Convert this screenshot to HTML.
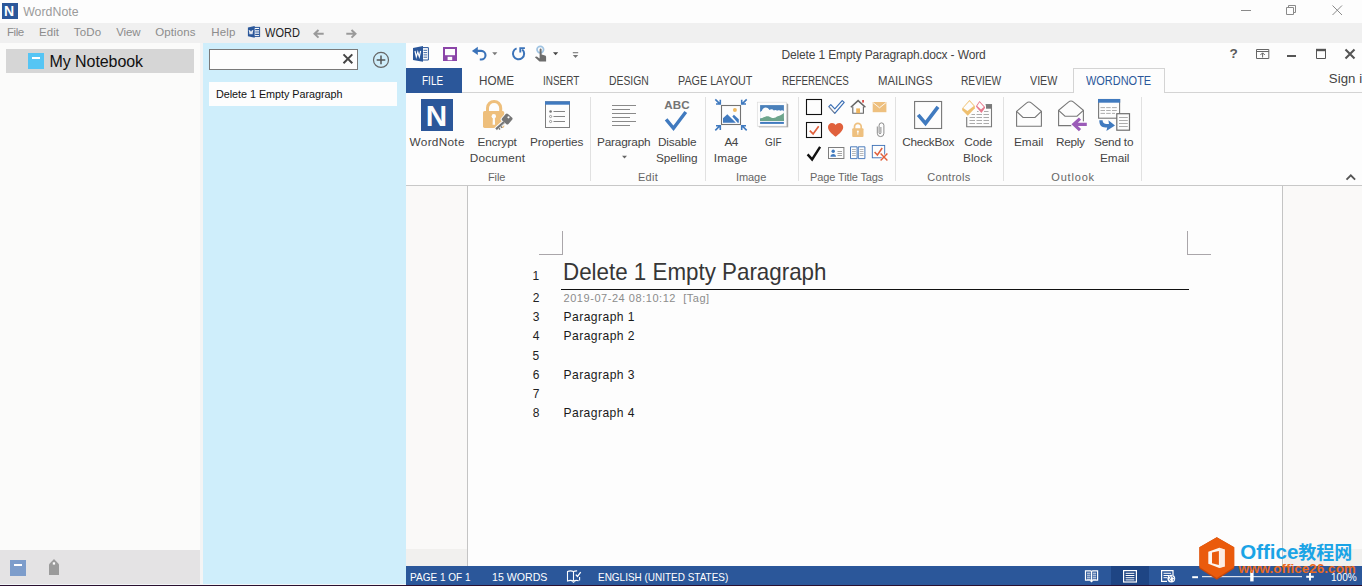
<!DOCTYPE html>
<html lang="en">
<head>
<meta charset="utf-8">
<title>WordNote</title>
<style>
html,body{margin:0;padding:0}
body{width:1362px;height:586px;overflow:hidden;position:relative;background:#fdfdfd;font-family:"Liberation Sans",sans-serif}
.b{position:absolute;box-sizing:border-box}
.t{position:absolute;white-space:pre;display:block}
svg{position:absolute;overflow:visible}
</style>
</head>
<body>
<!-- WordNote title bar -->
<div class="b" style="left:0;top:0;width:1362px;height:23px;background:#fdfdfd"></div>
<!-- menu bar -->
<div class="b" style="left:0;top:23px;width:1362px;height:20px;background:#f0f0f0"></div>
<!-- left panel -->
<div class="b" style="left:0;top:43px;width:203px;height:541px;background:#fbfbfa"></div>
<div class="b" style="left:6px;top:49px;width:188px;height:24px;background:#d6d6d6"></div>
<div class="b" style="left:0;top:550px;width:200px;height:34px;background:#e4e3e4"></div>
<div class="b" style="left:200px;top:43px;width:3px;height:541px;background:#f4f4f4"></div>
<!-- page list panel -->
<div class="b" style="left:203px;top:43px;width:203px;height:541px;background:#cfeefb"></div>
<div class="b" style="left:209px;top:49px;width:149px;height:21px;background:#fdfdfd;border:1px solid #7a7a7a"></div>
<div class="b" style="left:209px;top:82px;width:188px;height:24px;background:#fdfdfd"></div>
<!-- Word window -->
<div class="b" style="left:406px;top:43px;width:956px;height:541px;background:#fdfdfd"></div>
<div class="b" style="left:406px;top:68px;width:56px;height:25px;background:#2b579a"></div>
<div class="b" style="left:462px;top:92px;width:900px;height:1px;background:#d4d4d4"></div>
<div class="b" style="left:1073px;top:68px;width:92px;height:25px;background:#fdfdfd;border:1px solid #d4d4d4;border-bottom:none"></div>
<!-- ribbon group separators -->
<div class="b" style="left:590px;top:97px;width:1px;height:84px;background:#e1e1e1"></div>
<div class="b" style="left:705px;top:97px;width:1px;height:84px;background:#e1e1e1"></div>
<div class="b" style="left:798px;top:97px;width:1px;height:84px;background:#e1e1e1"></div>
<div class="b" style="left:895px;top:97px;width:1px;height:84px;background:#e1e1e1"></div>
<div class="b" style="left:1003px;top:97px;width:1px;height:84px;background:#e1e1e1"></div>
<div class="b" style="left:1141px;top:97px;width:1px;height:84px;background:#e1e1e1"></div>
<!-- ribbon bottom -->
<div class="b" style="left:406px;top:185px;width:956px;height:1px;background:#c8c8c8"></div>
<!-- doc area -->
<div class="b" style="left:406px;top:186px;width:956px;height:380px;background:#faf9f8"></div>
<div class="b" style="left:467px;top:186px;width:816px;height:380px;background:#fdfdfd;border-left:1px solid #c4c4c4;border-right:1px solid #c4c4c4"></div>
<div class="b" style="left:406px;top:549px;width:61px;height:17px;background:#f1f0ee"></div>
<div class="b" style="left:1284px;top:549px;width:78px;height:17px;background:#f1f0ee"></div>
<!-- crop marks -->
<div class="b" style="left:539px;top:231px;width:24px;height:24px;border-right:1px solid #aaa6aa;border-bottom:1px solid #aaa6aa"></div>
<div class="b" style="left:1187px;top:231px;width:24px;height:24px;border-left:1px solid #aaa6aa;border-bottom:1px solid #aaa6aa"></div>
<!-- title underline -->
<div class="b" style="left:561px;top:289px;width:628px;height:1px;background:#111"></div>
<!-- status bar -->
<div class="b" style="left:406px;top:566px;width:956px;height:19px;background:#2b579a"></div>
<div class="b" style="left:1111px;top:566px;width:38px;height:19px;background:#1e4584"></div>
<!-- bottom edge -->
<div class="b" style="left:0;top:584px;width:406px;height:1px;background:#f2f6f8"></div>
<div class="b" style="left:0;top:585px;width:1362px;height:1px;background:#2a1030"></div>
<!-- app icon -->
<div class="b" style="left:2px;top:3px;width:16px;height:16px;background:#2b579a"></div>
<span class="t" style="left:3.900px;top:3px;font-size:14px;line-height:16px;font-weight:bold;color:#fff">N</span>
<!-- WordNote window controls -->
<svg style="left:1236px;top:0" width="126" height="23" viewBox="1236 0 126 23" fill="none" stroke="#8a8a8a" stroke-width="1">
<path d="M1241 10.5h10"/>
<path d="M1286.5 7.5h7v7h-7z M1288.5 7.5v-2h7v7h-2"/>
<path d="M1332.5 5.5l9.5 9.5 M1342 5.5l-9.5 9.5"/>
</svg>
<!-- menu: Word icon + arrows -->
<svg style="left:247px;top:25px" width="14" height="14" viewBox="247 25 14 14">
<rect x="253.500" y="27.400" width="6.100" height="9" fill="#fdfdfd" stroke="#2b579a" stroke-width="1"/>
<path d="M255.200 29.700h3.900M255.200 32h3.900M255.200 34.300h3.900" stroke="#2b579a" stroke-width="1.200"/>
<path d="M247.900 27.600l6.800-1.500v11.700l-6.800-1.500z" fill="#2b579a"/>
<path d="M249.200 30l.9 4.200.9-3.400.9 3.400.9-4.200" fill="none" stroke="#fff" stroke-width="0.900"/>
</svg>
<svg style="left:312px;top:28px" width="48" height="12" viewBox="312 28 48 12" fill="none" stroke="#9a9a9a" stroke-width="2">
<path d="M323.7 33.8h-9 M318.5 30l-4 3.8 4 3.8"/>
<path d="M346.3 33.8h9 M351.5 30l4 3.8-4 3.8"/>
</svg>
<!-- notebook icon -->
<div class="b" style="left:28px;top:53px;width:16px;height:16px;background:#56c5f4"></div>
<div class="b" style="left:32px;top:56.6px;width:8px;height:2.2px;background:#fff"></div>
<!-- search x and plus -->
<svg style="left:340px;top:50px" width="50" height="20" viewBox="340 50 50 20" fill="none">
<path d="M343.500 54.400l8.800 8.800 M352.300 54.400l-8.800 8.800" stroke="#444" stroke-width="2"/>
<circle cx="381" cy="59.900" r="7.500" stroke="#666" stroke-width="1.2"/>
<path d="M376.700 59.900h8.600 M381 55.600v8.600" stroke="#555" stroke-width="1.5"/>
</svg>
<!-- bottom-left icons -->
<div class="b" style="left:10px;top:560px;width:16px;height:16px;background:#7d9dcb"></div>
<div class="b" style="left:14px;top:564px;width:8px;height:2.4px;background:#fff"></div>
<svg style="left:48px;top:558px" width="12" height="18" viewBox="0 0 12 18">
<path d="M1 6.2L6 1l5 5.2V17H1z" fill="#9b9b9b"/><rect x="4.8" y="4.3" width="2.3" height="2.3" fill="#fdfdfd"/>
</svg>
<!-- QAT -->
<svg style="left:412px;top:45px" width="18" height="18" viewBox="0 0 18 18">
<path d="M9.5 2.6h6.9v12.4H9.5z" fill="#fdfdfd" stroke="#2b579a" stroke-width="1"/>
<path d="M11.5 5.3h3.6M11.5 7.6h3.6M11.5 9.9h3.6M11.5 12.2h3.6" stroke="#2b579a" stroke-width="0.9"/>
<path d="M1 2.9L11 1v15.8L1 14.9z" fill="#2b579a"/>
<path d="M3 6l1.3 5.8L5.8 7l1.5 4.8L8.6 6" fill="none" stroke="#fff" stroke-width="1.15"/>
</svg>
<svg style="left:443px;top:47px" width="14" height="14" viewBox="0 0 14 14">
<path d="M1 1h12v12H1z" fill="#fdfdfd" stroke="#8b45a8" stroke-width="2"/>
<path d="M1 8.200h12V13H1z" fill="#8b45a8"/>
<rect x="4.6" y="9.8" width="4.6" height="3.4" fill="#fdfdfd"/>
</svg>
<svg style="left:470px;top:45px" width="112" height="18" viewBox="470 45 112 18" fill="none">
<path d="M476 50.900h5.200a4.300 4.300 0 0 1 0 8.600h-1.400" stroke="#3b73b9" stroke-width="2.100"/>
<path d="M471.900 50.900l5.900-4.200v8.400z" fill="#3b73b9"/>
<path d="M492.2 52.3h5.2l-2.6 2.9z" fill="#7a7a7a"/>
<path d="M516.600 48.400A5.600 5.600 0 1 0 522.200 49.400" stroke="#3b73b9" stroke-width="2"/>
<path d="M524.900 48.100H520.300V52.500" stroke="#3b73b9" stroke-width="1.900"/>
<circle cx="540.300" cy="49.600" r="3.300" fill="#fdfdfd" stroke="#9fc3e2" stroke-width="1.700"/>
<path d="M539.6 49.4a1 1 0 0 1 2 0v5l3.4 1.2c.9.4 1.1.9 1.1 1.6v4.400h-6.6l-4.600-4.400c.9-1.100 2.200-.8 3.200.2l1.500 1.200z" fill="#6d6d6d"/>
<path d="M553 52.3h5.200l-2.600 2.900z" fill="#444"/>
<path d="M572.800 52.700h5.400" stroke="#777" stroke-width="1.100"/>
<path d="M572.800 55h5.400l-2.700 3z" fill="#777"/>
</svg>
<!-- Word window controls -->
<span class="t" style="left:1229.400px;top:46px;font-size:13.600px;line-height:15px;font-weight:bold;color:#5a5a5a">?</span>
<svg style="left:1250px;top:45px" width="112" height="18" viewBox="1250 45 112 18" fill="none">
<path d="M1256.500 49.500h12.300v9h-12.300z M1256.500 51.500h12.300" stroke="#666" stroke-width="1"/>
<path d="M1262.600 57.500v-4.500 M1260.400 55l2.200-2.200 2.200 2.200" stroke="#666" stroke-width="1"/>
<path d="M1287 56h9" stroke="#555" stroke-width="2"/>
<path d="M1316.500 50.500h9v8h-9z" stroke="#555" stroke-width="1"/><path d="M1316 50h10" stroke="#555" stroke-width="2.400"/>
<path d="M1345.500 49.500l9 9 M1354.500 49.500l-9 9" stroke="#555" stroke-width="2.100"/>
</svg>
<svg style="left:1340px;top:170px" width="20" height="14" viewBox="1340 170 20 14" fill="none">
<path d="M1346.500 179.600l4.300-4.300 4.300 4.300" stroke="#555" stroke-width="1.900"/>
</svg>
<!-- ribbon: WordNote N -->
<div class="b" style="left:421px;top:99px;width:32px;height:32px;background:#2b579a"></div>
<span class="t" style="left:425.700px;top:101.300px;font-size:29.600px;line-height:29.600px;font-weight:bold;color:#fdfdfd">N</span>
<!-- Encrypt lock + key -->
<svg style="left:480px;top:98px" width="36" height="36" viewBox="480 98 36 36" fill="none">
<path d="M487.500 112v-3.900a6.600 6.600 0 0 1 13.200 0v3.900" stroke="#eebf7c" stroke-width="3"/>
<rect x="483" y="111" width="21.200" height="16.900" rx="1.600" fill="#eebf7c"/>
<circle cx="493.800" cy="116.300" r="2.200" fill="#fdfdfd"/><path d="M492.900 117h1.900l.3 7.800h-2.500z" fill="#fdfdfd"/>
<path d="M496 129.400l8-7.200" stroke="#fdfdfd" stroke-width="4.600"/>
<rect x="-5.100" y="-5.100" width="10.200" height="10.200" rx="2" transform="translate(507 119) rotate(42)" fill="#fdfdfd"/>
<rect x="-4.300" y="-4.300" width="8.600" height="8.600" rx="1.600" transform="translate(507.100 119) rotate(42)" fill="#767676"/>
<path d="M496.100 129.300l8-7.200" stroke="#767676" stroke-width="2.500"/>
<path d="M497.400 129.600l7.200-6.500" stroke="#e8e8e8" stroke-width="0.700"/>
<path d="M498.900 128.200l1.200 1.300 M500.900 126.400l1.200 1.300" stroke="#767676" stroke-width="1.300"/>
<circle cx="508.500" cy="117.300" r="1.100" fill="#fdfdfd"/>
</svg>
<!-- Properties -->
<svg style="left:544px;top:100px" width="28" height="30" viewBox="544 100 28 30" fill="none">
<rect x="545.500" y="101.800" width="24" height="25.700" fill="#fdfdfd" stroke="#7d7d7d" stroke-width="1"/>
<rect x="545" y="101.300" width="25" height="3.400" fill="#407abf"/>
<circle cx="550.600" cy="111.500" r="1.300" fill="#777"/>
<circle cx="550.600" cy="116.500" r="1.100" stroke="#777" stroke-width="0.700"/>
<circle cx="550.600" cy="121.500" r="1.100" stroke="#777" stroke-width="0.700"/>
<path d="M553.500 111.500h11.500 M553.500 116.500h11.500 M553.500 121.500h11.500" stroke="#777" stroke-width="0.900"/>
</svg>
<!-- Paragraph -->
<svg style="left:610px;top:100px" width="30" height="62" viewBox="610 100 30 62" fill="none">
<path d="M612 105.500h24 M612 109.500h18 M612 113.500h24 M612 117.500h18 M612 121.500h24 M612 125.500h18" stroke="#7d7d7d" stroke-width="0.900"/>
<path d="M622 155.800h5l-2.500 2.800z" fill="#666"/>
</svg>
<!-- Disable Spelling -->
<span class="t" style="left:664.300px;top:98px;font-size:11.600px;line-height:13px;font-weight:bold;color:#747474;letter-spacing:0.100px">ABC</span>
<svg style="left:660px;top:108px" width="34" height="26" viewBox="660 108 34 26" fill="none">
<path d="M666.100 119.300L673.500 128.300L685.800 111.900" stroke="#407abf" stroke-width="3.400"/>
</svg>
<!-- A4 Image -->
<svg style="left:712px;top:97px" width="38" height="36" viewBox="712 97 38 36" fill="none">
<rect x="721.500" y="105.500" width="19" height="19" fill="#fdfdfd" stroke="#737373" stroke-width="1.100"/>
<circle cx="734.900" cy="109.900" r="2" fill="#efb960"/>
<path d="M723 122.700v-4.400l4.300-4.100 8.600 8.500z" fill="#407abf"/>
<path d="M732.300 116.400l1.600-1.600 4.900 4.500v3.400h-1.200z" fill="#407abf"/>
<g stroke="#407abf" stroke-width="1.600">
<path d="M715.300 99.400l5 5 M716 104h4.300v-4.300"/>
<path d="M746.700 99.400l-5 5 M746 104h-4.300v-4.300"/>
<path d="M715.300 130.400l5-5 M716 125.800h4.300v4.300"/>
<path d="M746.700 130.400l-5-5 M746 125.800h-4.300v4.300"/>
</g>
</svg>
<!-- GIF -->
<svg style="left:755px;top:100px" width="36" height="30" viewBox="755 100 36 30" fill="none">
<rect x="759" y="104" width="29.300" height="23.400" fill="#8a8a8a" opacity="0.550"/>
<rect x="758.400" y="103.400" width="29.200" height="23.400" fill="#5a5a5a" opacity="0.450"/>
<rect x="757.300" y="102.200" width="29.200" height="24" fill="#fdfdfd" stroke="#dcdcdc" stroke-width="0.700"/>
<rect x="760.100" y="105.100" width="23.800" height="15.900" fill="#4a80ba"/>
<path d="M760.100 112c.8-.6 1.400-1 1.900-1.200.2-2.600 3.400-4.200 5.600-2.800.9.500 1.500 1.200 1.900 2 1.300-1 3.400-.8 4.300.5 1-.7 2.500-.7 3.400.3.800-.6 2.200-.6 3 0 1.200-.9 2.800-.7 3.700.2v7.500h-23.800z" fill="#fdfdfd"/>
<path d="M760.100 118.700c1.800-.6 3.600-1.500 5.200-2 1.500-.5 2.800-.4 4.200 0 1.500.5 2.600 1.400 4 1.400 1.600 0 2.600-1.200 4.200-1.800 2.200-.8 4.400-1.800 6.200-3.400V121h-23.800z" fill="#6da58c"/>
<rect x="760.100" y="121.900" width="23.800" height="2" fill="#407abf"/>
</svg>
<!-- Page Title Tags grid -->
<svg style="left:804px;top:97px" width="88" height="66" viewBox="804 97 88 66" fill="none">
<!-- row1 -->
<rect x="806.500" y="99.500" width="15" height="15" fill="#fdfdfd" stroke="#111" stroke-width="1.100"/>
<path d="M828.800 106.600l2-2 4 4.200 7.400-8.200 2 1.800-9.400 11z" fill="#fdfdfd" stroke="#3b6fb5" stroke-width="1.200" stroke-linejoin="round"/>
<path d="M829.400 107.200l5.400 6" stroke="#e9a050" stroke-width="0.500"/>
<path d="M850.800 107.200l7.300-6.600 7.300 6.600" stroke="#666" stroke-width="1.500"/>
<path d="M852.800 106.500v6.700h10.600v-6.700" stroke="#666" stroke-width="1.100"/>
<rect x="856.200" y="108.400" width="3.800" height="4.800" fill="#eeb55f"/>
<rect x="862.200" y="100" width="1.700" height="2.600" fill="#d9413a"/>
<rect x="872.700" y="102" width="13.700" height="10.200" fill="#eec07f"/>
<path d="M873 102.600l6.500 5.200 6.500-5.200" stroke="#fdfdfd" stroke-width="0.900"/>
<!-- row2 -->
<rect x="806.500" y="122.500" width="15" height="15" fill="#fdfdfd" stroke="#111" stroke-width="1.100"/>
<path d="M809.800 130.600l3.300 3.300 5.600-7.600" stroke="#e0603c" stroke-width="1.700"/>
<path d="M835.600 136.800c-3.600-2.900-7.600-5.800-7.600-9.800 0-2.300 1.800-4.100 4-4.100 1.500 0 2.900.8 3.600 2.200.7-1.400 2.100-2.200 3.600-2.200 2.200 0 4 1.800 4 4.100 0 4-4 6.900-7.600 9.800z" fill="#e0603c"/>
<path d="M854.500 129v-2.300a3.350 3.350 0 0 1 6.700 0v2.300" stroke="#eec07f" stroke-width="1.700"/>
<rect x="852.200" y="128.300" width="11.300" height="8.700" rx="1" fill="#eec07f"/>
<circle cx="857.850" cy="131.500" r="1" fill="#fdfdfd"/><rect x="857.400" y="131.700" width="0.900" height="3" fill="#fdfdfd"/>
<path d="M877.300 126.500v6.800a3.300 3.300 0 0 0 6.600 0v-8a2.400 2.400 0 0 0-4.800 0v7.500a.9.900 0 0 0 1.800 0v-5.800" stroke="#7d7d7d" stroke-width="0.900"/>
<!-- row3 -->
<path d="M807.600 154.400l4.500 5 8-12.600" stroke="#111" stroke-width="2.400"/>
<rect x="828.500" y="147.500" width="15.400" height="11" fill="#fdfdfd" stroke="#7d7d7d" stroke-width="1"/>
<circle cx="833.200" cy="151.300" r="1.700" fill="#407abf"/><path d="M830.400 156.800c0-3.600 5.600-3.600 5.600 0z" fill="#407abf"/>
<path d="M837.500 151.500h4.500 M837.500 153.500h4.500 M837.500 155.500h4.500" stroke="#8d8d8d" stroke-width="0.800"/>
<path d="M850.500 146.800h6.600v11.800h-6.600z M858.300 146.800h6.600v11.800h-6.600z" stroke="#3b6fb5" stroke-width="0.900" fill="#fdfdfd"/>
<path d="M852 149.500h3.800 M852 151.500h3.800 M852 153.500h3.800 M852 155.500h3.800 M859.700 149.500h3.800 M859.700 151.500h3.800 M859.700 153.500h3.800 M859.700 155.500h3.800" stroke="#9a9a9a" stroke-width="0.700"/>
<rect x="872.300" y="145.400" width="12.400" height="12.400" fill="#fdfdfd" stroke="#3b6fb5" stroke-width="0.900"/>
<path d="M874.600 152l2.800 3 4.800-7" stroke="#e0603c" stroke-width="1.500"/>
<path d="M880.600 153.400l6.800 7.200 M887.400 153.400l-6.800 7.200" stroke="#fdfdfd" stroke-width="2.600"/>
<path d="M880.600 153.400l6.800 7.200 M887.400 153.400l-6.800 7.200" stroke="#e0603c" stroke-width="1.400"/>
</svg>
<!-- CheckBox -->
<svg style="left:912px;top:99px" width="32" height="32" viewBox="912 99 32 32" fill="none">
<rect x="914.600" y="101.500" width="27" height="27" fill="#fdfdfd" stroke="#777" stroke-width="1.100"/>
<path d="M918.200 114.800L925.500 123.400L938 106.800" stroke="#407abf" stroke-width="3.600"/>
</svg>
<!-- Code Block -->
<svg style="left:960px;top:98px" width="34" height="32" viewBox="960 98 34 32" fill="none">
<path d="M966.700 117v9.700h24.800v-22h-6" stroke="#7a7a7a" stroke-width="1.100"/>
<rect x="986" y="104.200" width="6" height="4.500" fill="#7a7a7a"/>
<g stroke="#a2a2a2" stroke-width="0.900"><path d="M977 111.500h1.600 M984 111.500h4.500 M971.500 114.500h3.500 M976.500 114.500h5.500 M983.500 114.500h5.500 M969.500 117.500h5.500 M976.500 117.500h5.500 M983.500 117.500h5.500 M969.500 120.500h5.500 M976.500 120.500h5.500 M983.500 120.500h5.500 M969.500 123.500h5.500 M976.500 123.500h5.500 M983.500 123.500h5.500"/></g>
<path d="M969.500 100.100l5.300 5.800v2.300l-7 7.600-5.600-5.600v-2z" fill="#efc070"/>
<path d="M969.500 101.300l4.300 4.700-6.300 4.900-4.300-2.800z" fill="#fdfdfd"/>
<path d="M979.500 101l5.500 5.900v1l-3.600 5.100-5.300-6.200v-.9z" fill="#e8788c"/>
<path d="M979.500 102.200l4.300 4.700-2.800 2.700-3.800-3.600z" fill="#fdfdfd"/>
</svg>
<!-- Email / Reply / Send to Email -->
<svg style="left:1012px;top:97px" width="122" height="36" viewBox="1012 97 122 36" fill="none">
<g stroke="#777" stroke-width="1.100">
<path d="M1016.600 111.300l9.800-8.200c1.600-1.300 3.600-1.300 5.200 0l9.800 8.200v15h-24.800z" fill="#fdfdfd"/>
<path d="M1016.600 111.300l6.400 6.200h12l6.400-6.200"/>
<path d="M1071.500 125.600h-12.900v-15.300l9.800-8.200c1.600-1.300 3.600-1.300 5.200 0l9.800 8.200v11.100" fill="#fdfdfd"/>
<path d="M1058.600 110.300l6.400 5.900h12l6.400-5.900"/>
</g>
<path d="M1086.800 124.300h-11.500 M1080 118.600l-6.200 5.700 6.200 5.900" stroke="#fdfdfd" stroke-width="5" fill="none"/>
<path d="M1086.800 124.300h-11.500 M1080 118.600l-6.200 5.700 6.200 5.900" stroke="#9b5bb8" stroke-width="3.200" fill="none"/>
<rect x="1098.600" y="99.500" width="21" height="18.700" fill="#fdfdfd" stroke="#777" stroke-width="1.100"/>
<rect x="1098" y="99" width="22.200" height="3.700" fill="#407abf"/>
<g stroke="#a4a4a4" stroke-width="0.900"><path d="M1100.500 107.600h4.500 M1106.200 107.600h4.500 M1112 107.600h4.800 M1100.500 110.500h4.500 M1106.200 110.500h4.500 M1112 110.500h4.800 M1100.500 113.400h4.500 M1106.200 113.400h4.500 M1112 113.400h3"/></g>
<rect x="1116.800" y="113.700" width="12.700" height="16.500" fill="#fdfdfd" stroke="#6e6e6e" stroke-width="1.200"/>
<path d="M1119 117.500h8.800 M1119 120.500h8.800 M1119 123.500h8.800 M1119 126.500h8.800" stroke="#a4a4a4" stroke-width="0.900"/>
<path d="M1099.300 120.200h3.300c0 2.600 1.600 3.700 4 3.700h2.400l-.6-3.700 6.600 5.200-8.600 5.600.8-3.600h-1.800c-4 0-6.100-2.400-6.100-7.200z" fill="#407abf"/>
</svg>
<!-- status bar icons -->
<svg style="left:560px;top:566px" width="30" height="18" viewBox="560 566 30 18" fill="none" stroke="#fff" stroke-width="1.100">
<path d="M567.500 571.500c2-.8 4-.8 6 0v9.500c-2-.8-4-.8-6 0z"/>
<path d="M573.500 571.500c1.200-.5 2.400-.7 3.600-.6 M573.500 581c1.600-.7 3.400-.8 5.200-.3 M579.600 577v3.600"/>
<path d="M575.800 574.600l1.700 1.900 3.200-4.300" stroke-width="1.300"/>
<path d="M572 581.200l1.500 1.600 1.500-1.600" stroke-width="0.900"/>
</svg>
<svg style="left:1080px;top:566px" width="240" height="18" viewBox="1080 566 240 18" fill="none">
<g stroke="#fff" stroke-width="1.200">
<path d="M1085.500 570.800h5c.6 0 1 .4 1 1v9.400c0-.6-.4-1-1-1h-5z M1097.600 570.800h-5c-.6 0-1 .4-1 1v9.400c0-.6.400-1 1-1h5z"/>
</g>
<path d="M1087 573.200h3.400 M1087 575.200h3.400 M1087 577.200h3.400 M1087 579.200h3.400 M1092.800 573.200h3.400 M1092.800 575.200h3.400 M1092.800 577.200h3.400 M1092.800 579.200h3.400" stroke="#fff" stroke-width="0.900"/>
<path d="M1089.800 580.800l1.700 1.800 1.700-1.800z" fill="#fff"/>
<rect x="1123.600" y="570.600" width="12.800" height="11.400" stroke="#fff" stroke-width="1.200"/>
<path d="M1125.600 573.300h8.800 M1125.600 575.500h8.800 M1125.600 577.700h8.800 M1125.600 579.900h8.800" stroke="#fff" stroke-width="1"/>
<path d="M1167 581.400h-5.400v-10.800h11.400v4.400" stroke="#fff" stroke-width="1.200"/>
<path d="M1163.500 573.300h7.600 M1163.500 575.500h5.600 M1163.500 577.700h3.600" stroke="#fff" stroke-width="1"/>
<circle cx="1171.300" cy="578.600" r="3.900" fill="#fff"/>
<path d="M1169.400 576.300c1.400.4 1.600 1.600.600 2.400-.8.600-.4 1.600.600 2 M1172.400 575.700c-.6 1 .2 1.800 1.400 1.800 M1173.400 580.600c-.4-.8-.2-1.400.800-1.600" stroke="#2b579a" stroke-width="0.900"/>
<path d="M1192.200 577.200h5.800" stroke="#fff" stroke-width="2"/>
<path d="M1202 576.700h100" stroke="#fff" stroke-width="1"/>
<rect x="1250.200" y="570.200" width="3.400" height="11.200" fill="#fff"/>
<path d="M1306.200 576.800h7.600 M1310 573v7.600" stroke="#fff" stroke-width="1.900"/>
</svg>
<!-- watermark -->
<svg style="left:1196px;top:534px" width="42" height="50" viewBox="1196 534 42 50">
<path d="M1216.800 537.300l17.400 10v21.300l-17.400 11.200-17.400-11.200v-21.300z" fill="#c5470c"/>
<path d="M1216.800 537.300l17.400 10v19.600l-17.400 11.200-17.400-11.200v-19.600z" fill="#ea5b0c"/>
<path d="M1208.300 551.800l11-4.100 5.500 1.800v17l-5.500 1.400-11-4.100z" fill="#fdf6f0"/>
<path d="M1212 552.600l6.900-1.700v14l-6.900-1.600z" fill="#ea5b0c"/>
<path d="M1219.300 547.700l5.500 1.800v17l-5.500 1.400z" fill="#fbe6d8" opacity="0.600"/>
</svg>
<span class="t" style="left:1240.200px;top:539.700px;font-size:20.500px;line-height:24px;font-weight:bold;color:#1ba4e6;font-family:'Liberation Sans','Noto Sans CJK SC',sans-serif">Office<span style="font-size:18px;position:relative;top:0.500px">教程网</span></span>
<span class="t" style="left:1238.600px;top:561.600px;font-size:13.500px;line-height:14px;font-weight:bold;color:#ea6a1e">www.office26.com</span>

<span class="t" style="left:23.21px;top:5px;font-size:12.3px;line-height:14px;color:#9b9b9b;letter-spacing:0.028px;">WordNote</span>
<span class="t" style="left:6.97px;top:26px;font-size:11.5px;line-height:12px;color:#8c8c8c;letter-spacing:-0.418px;">File</span>
<span class="t" style="left:38.97px;top:26px;font-size:11.5px;line-height:12px;color:#8c8c8c;letter-spacing:0.049px;">Edit</span>
<span class="t" style="left:73.68px;top:26px;font-size:11.5px;line-height:12px;color:#8c8c8c;letter-spacing:0.213px;">ToDo</span>
<span class="t" style="left:116.35px;top:26px;font-size:11.5px;line-height:12px;color:#8c8c8c;letter-spacing:-0.204px;">View</span>
<span class="t" style="left:155.25px;top:26px;font-size:11.5px;line-height:12px;color:#8c8c8c;letter-spacing:0.107px;">Options</span>
<span class="t" style="left:211.27px;top:26px;font-size:11.5px;line-height:12px;color:#8c8c8c;letter-spacing:0.148px;">Help</span>
<span class="t" style="left:265.23px;top:26px;font-size:12.3px;line-height:14px;color:#222;transform:scaleX(0.8947);transform-origin:0 0;">WORD</span>
<span class="t" style="left:49.54px;top:53px;font-size:16px;line-height:17px;color:#111;letter-spacing:-0.071px;">My Notebook</span>
<span class="t" style="left:215.99px;top:88px;font-size:10.8px;line-height:12px;color:#111;letter-spacing:-0.029px;">Delete 1 Empty Paragraph</span>
<span class="t" style="left:781.43px;top:48px;font-size:12px;line-height:14px;color:#444;letter-spacing:-0.141px;">Delete 1 Empty Paragraph.docx - Word</span>
<span class="t" style="left:422.28px;top:74px;font-size:12px;line-height:14px;color:#fff;transform:scaleX(0.8324);transform-origin:0 0;">FILE</span>
<span class="t" style="left:479.36px;top:74px;font-size:12px;line-height:14px;color:#444;transform:scaleX(0.9714);transform-origin:0 0;">HOME</span>
<span class="t" style="left:543.26px;top:74px;font-size:12px;line-height:14px;color:#444;transform:scaleX(0.8287);transform-origin:0 0;">INSERT</span>
<span class="t" style="left:609.15px;top:74px;font-size:12px;line-height:14px;color:#444;transform:scaleX(0.8647);transform-origin:0 0;">DESIGN</span>
<span class="t" style="left:678.42px;top:74px;font-size:12px;line-height:14px;color:#444;transform:scaleX(0.8978);transform-origin:0 0;">PAGE LAYOUT</span>
<span class="t" style="left:782.19px;top:74px;font-size:12px;line-height:14px;color:#444;transform:scaleX(0.8140);transform-origin:0 0;">REFERENCES</span>
<span class="t" style="left:877.67px;top:74px;font-size:12px;line-height:14px;color:#444;transform:scaleX(0.9511);transform-origin:0 0;">MAILINGS</span>
<span class="t" style="left:960.86px;top:74px;font-size:12px;line-height:14px;color:#444;transform:scaleX(0.8483);transform-origin:0 0;">REVIEW</span>
<span class="t" style="left:1029.80px;top:74px;font-size:12px;line-height:14px;color:#444;transform:scaleX(0.8905);transform-origin:0 0;">VIEW</span>
<span class="t" style="left:1086.24px;top:74px;font-size:12px;line-height:14px;color:#2b579a;transform:scaleX(0.9134);transform-origin:0 0;">WORDNOTE</span>
<span class="t" style="left:1328.77px;top:71px;font-size:13.2px;line-height:15px;color:#444;letter-spacing:0.096px;">Sign in</span>
<span class="t" style="left:409.58px;top:135px;font-size:11.8px;line-height:14px;color:#444;letter-spacing:0.288px;">WordNote</span>
<span class="t" style="left:477.54px;top:135px;font-size:11.8px;line-height:14px;color:#444;letter-spacing:-0.109px;">Encrypt</span>
<span class="t" style="left:469.74px;top:151px;font-size:11.8px;line-height:14px;color:#444;letter-spacing:0.216px;">Document</span>
<span class="t" style="left:529.94px;top:135px;font-size:11.8px;line-height:14px;color:#444;letter-spacing:-0.028px;">Properties</span>
<span class="t" style="left:596.94px;top:135px;font-size:11.8px;line-height:14px;color:#444;letter-spacing:-0.173px;">Paragraph</span>
<span class="t" style="left:657.94px;top:135px;font-size:11.8px;line-height:14px;color:#444;letter-spacing:-0.137px;">Disable</span>
<span class="t" style="left:656.07px;top:151px;font-size:11.8px;line-height:14px;color:#444;letter-spacing:-0.069px;">Spelling</span>
<span class="t" style="left:724.57px;top:135px;font-size:11.8px;line-height:14px;color:#444;letter-spacing:-0.743px;">A4</span>
<span class="t" style="left:713.66px;top:151px;font-size:11.8px;line-height:14px;color:#444;letter-spacing:0.234px;">Image</span>
<span class="t" style="left:764.69px;top:135px;font-size:11.8px;line-height:14px;color:#444;transform:scaleX(0.8460);transform-origin:0 0;">GIF</span>
<span class="t" style="left:902.19px;top:135px;font-size:11.8px;line-height:14px;color:#444;letter-spacing:-0.216px;">CheckBox</span>
<span class="t" style="left:964.19px;top:135px;font-size:11.8px;line-height:14px;color:#444;letter-spacing:-0.025px;">Code</span>
<span class="t" style="left:962.94px;top:151px;font-size:11.8px;line-height:14px;color:#444;letter-spacing:0.094px;">Block</span>
<span class="t" style="left:1013.94px;top:135px;font-size:11.8px;line-height:14px;color:#444;">Email</span>
<span class="t" style="left:1055.94px;top:135px;font-size:11.8px;line-height:14px;color:#444;letter-spacing:-0.274px;">Reply</span>
<span class="t" style="left:1094.07px;top:135px;font-size:11.8px;line-height:14px;color:#444;letter-spacing:-0.212px;">Send to</span>
<span class="t" style="left:1099.94px;top:151px;font-size:11.8px;line-height:14px;color:#444;">Email</span>
<span class="t" style="left:487.99px;top:171px;font-size:11px;line-height:12px;color:#666;letter-spacing:-0.085px;">File</span>
<span class="t" style="left:637.99px;top:171px;font-size:11px;line-height:12px;color:#666;letter-spacing:0.292px;">Edit</span>
<span class="t" style="left:735.91px;top:171px;font-size:11px;line-height:12px;color:#666;letter-spacing:-0.042px;">Image</span>
<span class="t" style="left:809.99px;top:171px;font-size:11px;line-height:12px;color:#666;letter-spacing:-0.119px;">Page Title Tags</span>
<span class="t" style="left:927.22px;top:171px;font-size:11px;line-height:12px;color:#666;letter-spacing:0.301px;">Controls</span>
<span class="t" style="left:1051.28px;top:171px;font-size:11px;line-height:12px;color:#666;letter-spacing:0.824px;">Outlook</span>
<span class="t" style="left:562.75px;top:259px;font-size:23.4px;line-height:26px;color:#363636;transform:scaleX(0.9558);transform-origin:0 0;">Delete 1 Empty Paragraph</span>
<span class="t" style="left:532.54px;top:269px;font-size:12px;line-height:14px;color:#222;">1</span>
<span class="t" style="left:532.68px;top:291px;font-size:12px;line-height:14px;color:#222;">2</span>
<span class="t" style="left:532.64px;top:310px;font-size:12px;line-height:14px;color:#222;">3</span>
<span class="t" style="left:532.73px;top:329px;font-size:12px;line-height:14px;color:#222;">4</span>
<span class="t" style="left:532.61px;top:349px;font-size:12px;line-height:14px;color:#222;">5</span>
<span class="t" style="left:532.67px;top:368px;font-size:12px;line-height:14px;color:#222;">6</span>
<span class="t" style="left:532.69px;top:387px;font-size:12px;line-height:14px;color:#222;">7</span>
<span class="t" style="left:532.69px;top:406px;font-size:12px;line-height:14px;color:#222;">8</span>
<span class="t" style="left:563.56px;top:292px;font-size:11px;line-height:12px;color:#8c8c8c;letter-spacing:0.541px;">2019-07-24 08:10:12  [Tag]</span>
<span class="t" style="left:563.53px;top:310px;font-size:12.1px;line-height:14px;color:#1a1a1a;letter-spacing:0.444px;">Paragraph 1</span>
<span class="t" style="left:563.53px;top:329px;font-size:12.1px;line-height:14px;color:#1a1a1a;letter-spacing:0.444px;">Paragraph 2</span>
<span class="t" style="left:563.53px;top:368px;font-size:12.1px;line-height:14px;color:#1a1a1a;letter-spacing:0.444px;">Paragraph 3</span>
<span class="t" style="left:563.53px;top:406px;font-size:12.1px;line-height:14px;color:#1a1a1a;letter-spacing:0.428px;">Paragraph 4</span>
<span class="t" style="left:410.36px;top:571px;font-size:11.2px;line-height:12px;color:#fff;transform:scaleX(0.8961);transform-origin:0 0;">PAGE 1 OF 1</span>
<span class="t" style="left:491.91px;top:571px;font-size:11.2px;line-height:12px;color:#fff;transform:scaleX(0.9472);transform-origin:0 0;">15 WORDS</span>
<span class="t" style="left:598.26px;top:571px;font-size:11.2px;line-height:12px;color:#fff;transform:scaleX(0.8908);transform-origin:0 0;">ENGLISH (UNITED STATES)</span>
<span class="t" style="left:1331.14px;top:571px;font-size:11.2px;line-height:12px;color:#fff;transform:scaleX(0.9032);transform-origin:0 0;">100%</span>
</body>
</html>
